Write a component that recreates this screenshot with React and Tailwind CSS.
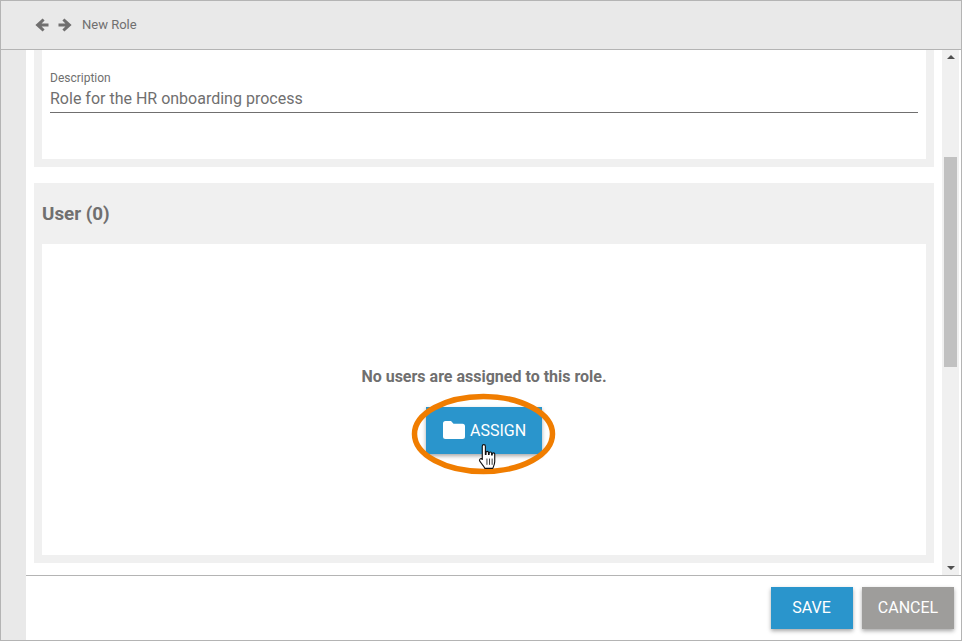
import React from "react";

function Cursor() {
  return (
    <svg className="absolute left-[477px] top-[442px]" width="21" height="27" viewBox="0 0 20 26">
      <path
        d="M5.500 1.500c1 0 1.500.7 1.500 1.700V11h.6V9.200c0-1.500 2.400-1.500 2.400 0V11h.6V9.800c0-1.500 2.400-1.500 2.400 0V11.500h.6v-.8c0-1.500 2.400-1.500 2.400 0v7.100c0 3-1.600 5.700-1.900 6.700H6.600c-.6-1.400-1.600-2.600-3-4.300L1.600 17.400c-1-1.400.9-3 2.100-1.800L4 15.900V3.200c0-1 .5-1.700 1.500-1.700z"
        fill="#fff"
        stroke="#111"
        strokeWidth="1.100"
        strokeLinejoin="round"
      />
      <path d="M8.500 15v6M11 15v6M13.500 15v6" stroke="#111" strokeWidth="0.8" />
    </svg>
  );
}

function Arrow({ flip }) {
  return (
    <svg width="14" height="14" viewBox="0 0 14 14" className={flip ? "-scale-x-100" : ""}>
      <path d="M13.500 5.400H6.600L9.600 2.400 7.600.4.400 7l7.200 6.600 2-2-3-3h6.900z" fill="#706f6f" />
    </svg>
  );
}

function Folder() {
  return (
    <svg className="mb-[2px]" width="22" height="18" viewBox="0 0 22 18">
      <path d="M2.500 0H8l2.500 2.800h9A2.500 2.500 0 0 1 22 5.300v10.200a2.500 2.500 0 0 1-2.500 2.500h-17A2.500 2.500 0 0 1 0 15.500V2.500A2.500 2.500 0 0 1 2.500 0z" fill="#fff" />
    </svg>
  );
}

export default function App() {
  return (
    <div
      className="relative flex h-[641px] w-[962px] overflow-hidden border border-[#b4b4b4] bg-white text-[#706f6f]"
      style={{ fontFamily: "Roboto, sans-serif" }}
    >
      <div className="flex h-full w-full flex-col">
        <header className="flex h-[49px] shrink-0 items-center border-b border-[#b4b4b4] bg-[#e9e9e9] pl-[34px]">
          <Arrow />
          <div className="ml-[9px]"><Arrow flip /></div>
          <span className="ml-[10px] text-[13px]">New Role</span>
        </header>
        <div className="flex min-h-0 flex-1">
          <div className="w-[25px] shrink-0 bg-[#e9e9e9]" />
          <div className="flex min-w-0 flex-1 flex-col">
            <div className="flex h-[526px] shrink-0 border-b border-[#b4b4b4]">
              <main className="flex w-[916px] shrink-0 flex-col px-2">
                <section className="h-[117px] shrink-0 bg-[#f0f0f0] px-2 pb-2">
                  <div className="h-[109px] bg-white px-2 pt-[21px]">
                    <div className="text-[12px] leading-[14px]">Description</div>
                    <div className="h-[28px] border-b border-[#706f6f] pt-[2px] text-[16px] leading-[24px]">
                      Role for the HR onboarding process
                    </div>
                  </div>
                </section>
                <section className="mt-4 flex h-[380px] flex-col bg-[#f0f0f0] px-2 pb-2">
                  <h2 className="flex h-[61px] shrink-0 items-center pt-[2px] text-[18.8px] font-bold">User (0)</h2>
                  <div className="flex flex-1 flex-col items-center bg-white pt-[123px]">
                    <p className="text-[16px] font-bold leading-[19px]">No users are assigned to this role.</p>
                    <button className="mt-[21px] flex h-[47px] w-[116px] items-center justify-center gap-[5px] bg-[#2a95cc] pl-[1px] text-[16px] text-white shadow-[0_2px_4px_rgba(0,0,0,0.35)]">
                      <Folder />
                      ASSIGN
                    </button>
                  </div>
                </section>
              </main>
              <aside className="flex w-[17px] shrink-0 flex-col items-center bg-[#f0f0f0]">
                <div className="mt-[5px] h-0 w-0 border-x-[4px] border-b-[4px] border-x-transparent border-b-[#505050]" />
                <div className="mt-[98px] h-[210px] w-[13px] bg-[#c1c1c1]" />
                <div className="mt-auto mb-[5px] h-0 w-0 border-x-[4px] border-t-[4px] border-x-transparent border-t-[#505050]" />
              </aside>
            </div>
            <footer className="flex flex-1 items-start justify-end gap-[9px] pt-[11px] pr-[7px]">
              <button className="flex h-[42px] w-[82px] items-center justify-center bg-[#2a95cc] pr-[1px] text-[16px] text-white shadow-[0_2px_4px_rgba(0,0,0,0.35)]">
                SAVE
              </button>
              <button className="flex h-[42px] w-[92px] items-center justify-center bg-[#9e9d9b] text-[16px] text-white shadow-[0_2px_4px_rgba(0,0,0,0.35)]">
                CANCEL
              </button>
            </footer>
          </div>
        </div>
      </div>
      <svg className="absolute left-[410px] top-[391px]" width="146" height="84" viewBox="0 0 146 84">
        <ellipse cx="72.500" cy="42" rx="69" ry="37.500" fill="none" stroke="#f07d00" strokeWidth="5.500" />
      </svg>
      <Cursor />
    </div>
  );
}
